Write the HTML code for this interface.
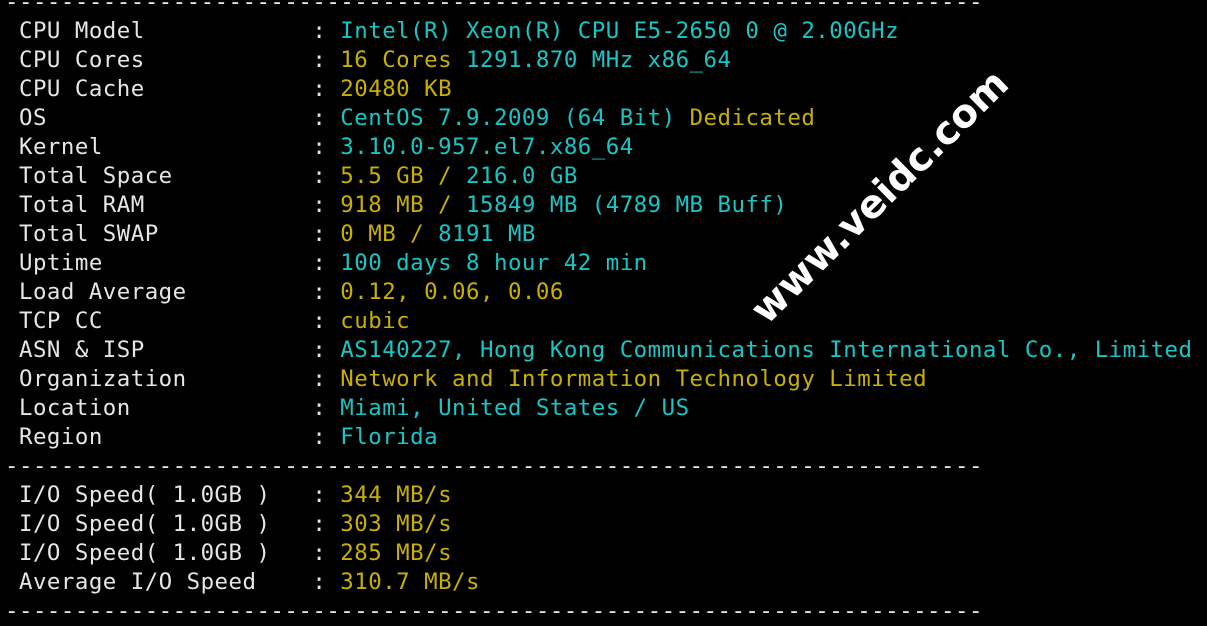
<!DOCTYPE html>
<html><head><meta charset="utf-8"><style>
html,body{margin:0;padding:0;background:#000;width:1207px;height:616px;overflow:hidden;}
pre{position:absolute;left:5px;top:-12.5px;margin:0;font-family:"DejaVu Sans Mono","Liberation Mono",monospace;font-size:22.4px;letter-spacing:0.49px;line-height:29px;color:#e6e6e6;white-space:pre;}
.c{color:#17c6c6}.y{color:#c9b000}
.wm{position:absolute;left:880px;top:197px;transform:translate(-50%,-50%) rotate(-44.5deg);font-family:"DejaVu Sans",sans-serif;font-weight:bold;font-size:39px;color:#fff;white-space:nowrap;}
</style></head><body>
<pre>----------------------------------------------------------------------
 CPU Model            : <span class="c">Intel(R) Xeon(R) CPU E5-2650 0 @ 2.00GHz</span>
 CPU Cores            : <span class="y">16 Cores</span> <span class="c">1291.870 MHz x86_64</span>
 CPU Cache            : <span class="y">20480 KB</span>
 OS                   : <span class="c">CentOS 7.9.2009 (64 Bit)</span> <span class="y">Dedicated</span>
 Kernel               : <span class="c">3.10.0-957.el7.x86_64</span>
 Total Space          : <span class="y">5.5 GB / </span><span class="c">216.0 GB</span>
 Total RAM            : <span class="y">918 MB / </span><span class="c">15849 MB (4789 MB Buff)</span>
 Total SWAP           : <span class="y">0 MB / </span><span class="c">8191 MB</span>
 Uptime               : <span class="c">100 days 8 hour 42 min</span>
 Load Average         : <span class="y">0.12, 0.06, 0.06</span>
 TCP CC               : <span class="y">cubic</span>
 ASN &amp; ISP            : <span class="c">AS140227, Hong Kong Communications International Co., Limited</span>
 Organization         : <span class="y">Network and Information Technology Limited</span>
 Location             : <span class="c">Miami, United States / US</span>
 Region               : <span class="c">Florida</span>
----------------------------------------------------------------------
 I/O Speed( 1.0GB )   : <span class="y">344 MB/s</span>
 I/O Speed( 1.0GB )   : <span class="y">303 MB/s</span>
 I/O Speed( 1.0GB )   : <span class="y">285 MB/s</span>
 Average I/O Speed    : <span class="y">310.7 MB/s</span>
----------------------------------------------------------------------</pre>
<div class="wm">www.veidc.com</div>
</body></html>
